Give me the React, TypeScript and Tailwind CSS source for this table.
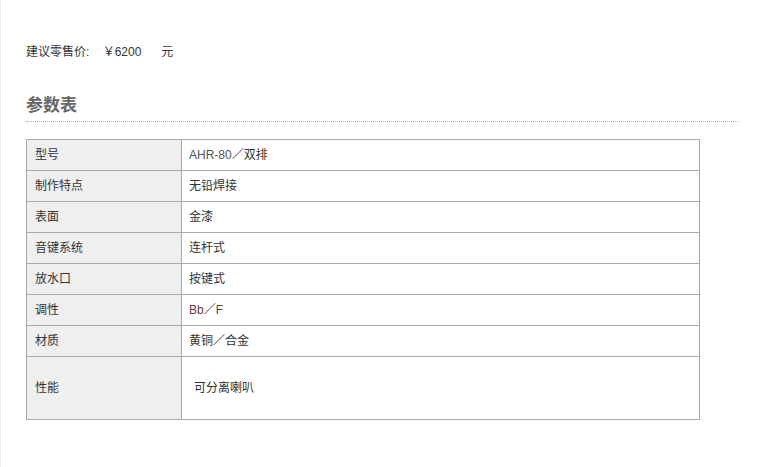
const rows: [string, React.ReactNode][] = [
  ['型号', <><span className="text-[#555]">AHR-80</span>／双排</>],
  ['制作特点', '无铅焊接'],
  ['表面', '金漆'],
  ['音键系统', '连杆式'],
  ['放水口', '按键式'],
  ['调性', <span className="text-[#6b3a3a]">Bb<span className="text-[#333]">／</span>F</span>],
  ['材质', '黄铜／合金'],
];

export default function App() {
  return (
    <div
      className="min-h-[467px] w-[760px] bg-white border-l border-[#eeeeee] text-[12px] text-[#333]"
      style={{ fontFamily: '"Liberation Sans", "Noto Sans CJK SC", sans-serif' }}
    >
      <div className="pt-[44px] pl-[25px]">
        <p className="leading-[16px]">
          建议零售价:&nbsp;&nbsp;&nbsp;&nbsp;￥6200&nbsp;&nbsp;&nbsp;&nbsp;&nbsp;&nbsp;元
        </p>
        <h2 className="mt-[36px] text-[17px] leading-[20px] font-bold text-[#666]">参数表</h2>
        <div className="mt-[5px] w-[712px] border-b border-dotted border-[#aaaaaa]" />
        <table className="mt-[17px] w-[674px] border-collapse">
          <tbody>
            {rows.map(([k, v]) => (
              <tr key={k} className="h-[31px]">
                <td className="w-[155px] border border-[#aaaaaa] bg-[#efefef] pl-[8px] align-middle">{k}</td>
                <td className="border border-[#aaaaaa] pl-[7px] align-middle">{v}</td>
              </tr>
            ))}
            <tr className="h-[63px]">
              <td className="w-[155px] border border-[#aaaaaa] bg-[#efefef] pl-[8px] align-middle">性能</td>
              <td className="border border-[#aaaaaa] pl-[12px] align-middle">可分离喇叭</td>
            </tr>
          </tbody>
        </table>
      </div>
    </div>
  );
}
